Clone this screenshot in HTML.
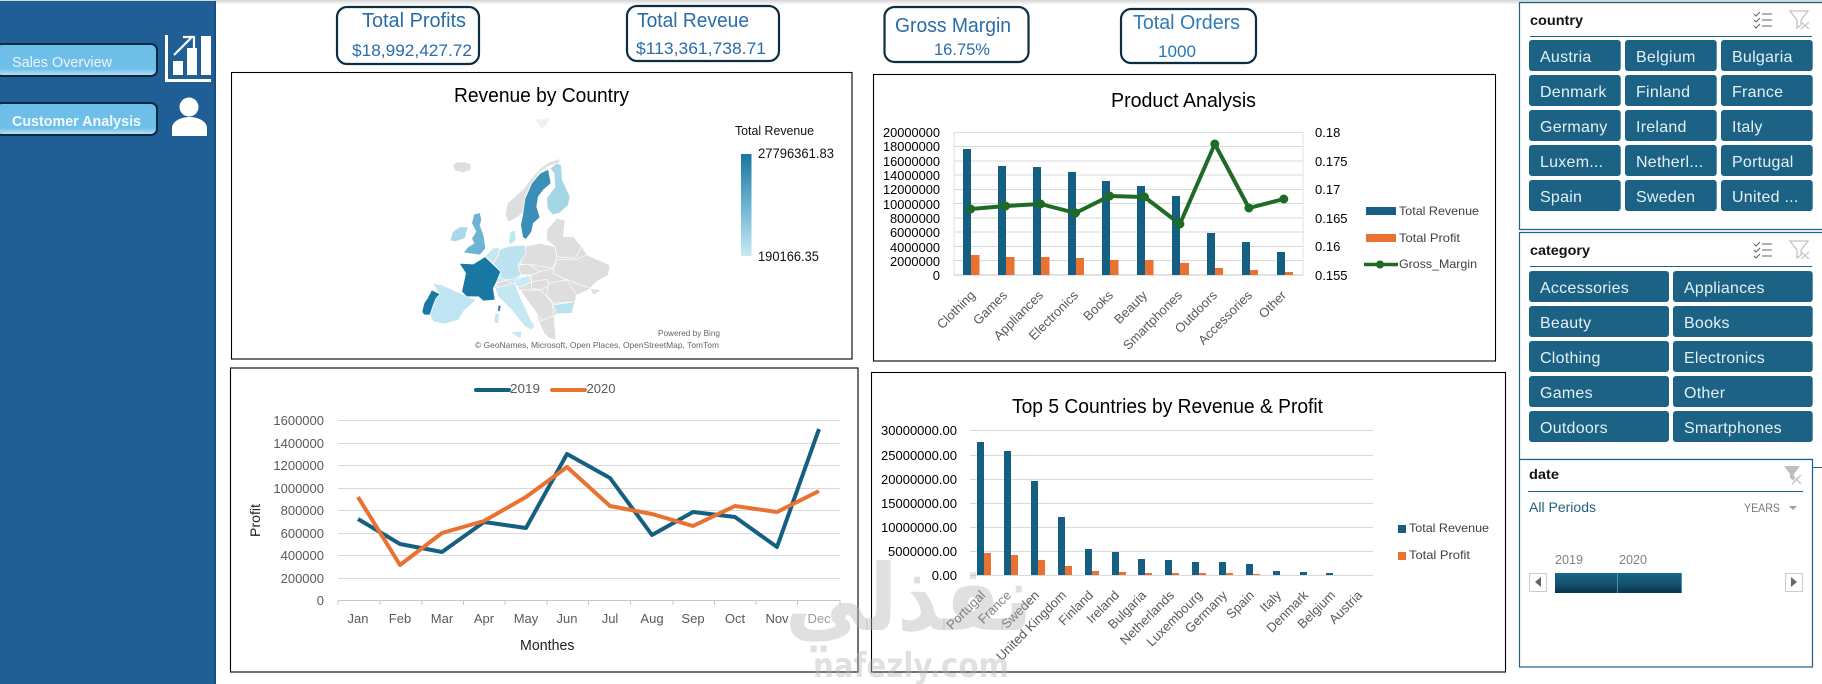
<!DOCTYPE html>
<html lang="en"><head><meta charset="utf-8"><title>Sales Dashboard</title>
<style>
html,body{margin:0;padding:0;background:#fff;width:1822px;height:684px;overflow:hidden}
svg{display:block;font-family:"Liberation Sans","DejaVu Sans",sans-serif}
.t{fill:#595959;font-size:13px}
.k{fill:#000;font-size:13px}
.sb{fill:#1b6285}
.st{fill:#e6f1f6;font-size:16px;letter-spacing:.25px}
.kp{fill:#fff;stroke:#0d2d42;stroke-width:2.2}
.kt{fill:#2a6ca8;font-size:20px}
.kv{fill:#2a6ca8;font-size:17px}
.g{stroke:#d9d9d9;stroke-width:1}
.box{fill:#fff;stroke:#000;stroke-width:1.1}
.rev{fill:#156082}.pro{fill:#e97132}
</style></head><body>
<svg width="1822" height="684" viewBox="0 0 1822 684" xmlns="http://www.w3.org/2000/svg">
<defs>
<linearGradient id="top" x1="0" y1="0" x2="0" y2="1"><stop offset="0" stop-color="#d4d4d4"/><stop offset="1" stop-color="#fff"/></linearGradient>
<linearGradient id="btn" x1="0" y1="0" x2="0" y2="1"><stop offset="0" stop-color="#6cbde8"/><stop offset=".78" stop-color="#6fc0e9"/><stop offset="1" stop-color="#c4e4f4"/></linearGradient>
<linearGradient id="leg" x1="0" y1="0" x2="0" y2="1"><stop offset="0" stop-color="#1a76a2"/><stop offset=".5" stop-color="#6cb1d1"/><stop offset="1" stop-color="#c8eaf3"/></linearGradient>
<linearGradient id="tl" x1="0" y1="0" x2="0" y2="1"><stop offset="0" stop-color="#186585"/><stop offset=".5" stop-color="#135672"/><stop offset="1" stop-color="#0b3347"/></linearGradient>
</defs>
<rect width="1822" height="684" fill="#fff"/>
<rect width="1822" height="5" fill="url(#top)"/>

<!-- sidebar -->
<rect x="0" y="1" width="214.500" height="683" fill="#205e96"/>
<rect x="214.500" y="1" width="1.500" height="683" fill="#174a78"/>
<rect x="-4" y="44" width="161" height="32" rx="6" fill="url(#btn)" stroke="#0a2a40" stroke-width="2"/>
<text x="12" y="67" font-size="15" fill="#eaf6fc" textLength="100" lengthAdjust="spacingAndGlyphs">Sales Overview</text>
<rect x="-4" y="103" width="161" height="32" rx="6" fill="url(#btn)" stroke="#0a2a40" stroke-width="2"/>
<text x="12" y="126" font-size="15" font-weight="700" fill="#f2fafe" textLength="129" lengthAdjust="spacingAndGlyphs">Customer Analysis</text>
<path d="M165 35h3v44h43v3h-46z" fill="#fff"/>
<path d="M173 61h10v14h-10zM187 48h10v27h-10zM201 36h10v39h-10z" fill="#fff"/>
<path d="M174 55L191 38" stroke="#fff" stroke-width="2.2" fill="none"/><path d="M183 37h11v11" stroke="#fff" stroke-width="2.2" fill="none"/>
<circle cx="189" cy="107" r="9.500" fill="#fff"/>
<path d="M172 136v-8c0-6 8-11 17.500-11s17.500 5 17.500 11v8z" fill="#fff"/>

<!-- KPI -->
<rect class="kp" x="337" y="7" width="142" height="57" rx="10"/>
<text class="kt" x="362" y="27" textLength="104" lengthAdjust="spacingAndGlyphs">Total Profits</text>
<text class="kv" x="352" y="56" textLength="120" lengthAdjust="spacingAndGlyphs">$18,992,427.72</text>
<rect class="kp" x="627" y="6" width="152" height="55" rx="10"/>
<text class="kt" x="637" y="27" textLength="112" lengthAdjust="spacingAndGlyphs">Total Reveue</text>
<text class="kv" x="636" y="54" textLength="130" lengthAdjust="spacingAndGlyphs">$113,361,738.71</text>
<rect class="kp" x="884.500" y="7" width="144" height="55" rx="10"/>
<text class="kt" x="895" y="32" textLength="116" lengthAdjust="spacingAndGlyphs">Gross Margin</text>
<text class="kv" x="934" y="55" textLength="56" lengthAdjust="spacingAndGlyphs">16.75%</text>
<rect class="kp" x="1121" y="9" width="135" height="54" rx="10"/>
<text class="kt" x="1133" y="29" style="fill:#2f7ab8" textLength="107" lengthAdjust="spacingAndGlyphs">Total Orders</text>
<text class="kv" x="1158" y="57" style="fill:#2278ba" textLength="38" lengthAdjust="spacingAndGlyphs">1000</text>

<!-- Revenue by Country -->
<rect class="box" x="231.500" y="72.500" width="620.500" height="286.500"/>
<text x="454" y="102" font-size="20" fill="#000" textLength="175" lengthAdjust="spacingAndGlyphs">Revenue by Country</text>
<text x="735" y="135" font-size="13" fill="#111" textLength="79" lengthAdjust="spacingAndGlyphs">Total Revenue</text>
<rect x="741" y="154" width="10.500" height="102" fill="url(#leg)"/>
<text x="758" y="158" font-size="13.500" fill="#111" textLength="76" lengthAdjust="spacingAndGlyphs">27796361.83</text>
<text x="758" y="261" font-size="13.500" fill="#111" textLength="61" lengthAdjust="spacingAndGlyphs">190166.35</text>
<text x="658" y="336" font-size="8.500" fill="#666" textLength="62" lengthAdjust="spacingAndGlyphs">Powered by Bing</text>
<text x="475" y="348" font-size="8.500" fill="#666" textLength="244" lengthAdjust="spacingAndGlyphs">© GeoNames, Microsoft, Open Places, OpenStreetMap, TomTom</text>
<g transform="translate(400,140) scale(.33333)" stroke="#fff" stroke-width="2" stroke-linejoin="round">
<polygon fill="#c5e7f2" stroke="none" points="285,445 345,430 362,405 355,375 378,340 375,315 298,328 255,350 302,395"/>
<polygon fill="#dedede" stroke="none" points="378,318 465,320 440,270 470,235 495,240 490,290 520,290 545,320 560,345 630,375 625,405 590,425 570,445 530,465 525,485 462,528 468,600 432,580 417,545 410,520 360,450 345,430 395,405 355,375"/>
<g fill="#dedede">
<polygon fill="#f0f0f0" points="405,-62 452,-66 440,-46 425,-32 415,-45"/>
<polygon points="158,75 170,66 195,66 214,72 212,90 190,98 165,92"/>
<polygon points="316,225 322,190 345,170 372,145 392,118 420,85 448,66 480,56 478,68 447,78 420,96 395,130 376,170 372,215 352,232 325,247"/>
<polygon points="440,270 470,235 495,240 490,290 520,290 545,320 525,355 470,350 465,320 440,300"/>
<polygon points="378,318 420,310 465,320 470,350 460,385 400,375 360,372"/>
<polygon points="460,385 475,358 530,358 560,345 630,375 625,405 590,425 570,445 530,430 490,415 460,400"/>
<polygon points="570,445 605,450 580,465"/>
<polygon points="355,375 385,372 420,395 395,405 362,405"/>
<polygon points="395,425 440,418 450,435 420,450 395,445"/>
<polygon points="420,395 460,385 460,400 490,415 500,420 445,430 440,418 395,425 395,405"/>
<polygon points="285,430 320,420 340,435 300,445"/>
<polygon points="445,430 500,420 530,465 525,485 460,490 440,465"/>
<polygon points="360,450 420,450 440,470 458,492 460,530 430,545 410,520"/>
<polygon points="417,545 462,528 468,600 448,595 432,580"/>
</g>
<polygon fill="#3a8fb8" points="445,88 453,130 430,150 415,170 410,200 420,232 400,250 395,275 378,298 368,292 362,255 368,225 375,175 395,130 420,100"/>
<polygon fill="#a4d6e8" points="470,70 484,75 487,120 510,170 505,195 480,218 458,225 442,205 440,175 465,140 462,100 450,85"/>
<polygon fill="#6cb3d5" points="222,222 240,218 245,240 240,255 252,290 257,325 240,345 190,338 205,320 222,310 215,295 228,275 215,250"/>
<polygon fill="#a8d8ea" points="150,302 158,275 180,260 205,262 200,275 195,295 165,305"/>
<polygon fill="#bfe4f2" points="98,430 125,435 185,462 228,480 190,515 175,540 135,552 100,545 90,525 108,470 118,462"/>
<polygon fill="#1a78a5" points="95,450 120,462 108,475 100,495 90,525 72,525 66,515 72,490 82,475"/>
<polygon fill="#1877a3" points="178,370 220,372 255,350 302,395 290,425 280,445 285,480 250,483 235,470 200,470 185,455 197,400"/>
<polygon fill="#bde3f1" points="298,328 330,318 375,315 378,340 355,375 362,405 330,420 300,415 302,395 280,370 295,345"/>
<polygon fill="#c2e6f2" points="330,275 345,270 348,300 335,312 325,310"/>
<polygon fill="#c5e7f2" points="255,350 278,325 298,322 295,345 280,370"/>
<polygon fill="#c8eaf5" points="345,420 385,405 395,425 365,440 345,437"/>
<polygon fill="#c5e7f2" points="285,445 345,430 360,470 395,545 405,560 393,570 375,560 335,510 295,470"/>
<polygon fill="#c5e7f2" points="330,576 366,573 362,597"/>
<polygon fill="#b9e1f0" points="460,495 525,485 515,520 470,522"/>
<polygon fill="#1a78a5" points="295,495 303,497 300,515 293,513"/>
<polygon fill="#c5e7f2" points="285,520 298,520 296,550 282,550"/>
</g>

<!-- Product Analysis -->
<rect class="box" x="873.500" y="74.500" width="622" height="286.500"/>
<text x="1111" y="107" font-size="20" fill="#000" textLength="145" lengthAdjust="spacingAndGlyphs">Product Analysis</text>
<rect x="954" y="132.500" width="349" height="142.500" fill="none" stroke="#cfe4ee"/>
<g class="g"><path d="M954 146.500H1303M954 161H1303M954 175H1303M954 189.500H1303M954 203.500H1303M954 218H1303M954 232H1303M954 246.500H1303M954 260.500H1303"/></g>
<path d="M954 275H1303" stroke="#c4c4c4"/>
<g class="k" text-anchor="end">
<text x="940" y="137" textLength="57" lengthAdjust="spacingAndGlyphs">20000000</text>
<text x="940" y="151" textLength="57" lengthAdjust="spacingAndGlyphs">18000000</text>
<text x="940" y="166" textLength="57" lengthAdjust="spacingAndGlyphs">16000000</text>
<text x="940" y="180" textLength="57" lengthAdjust="spacingAndGlyphs">14000000</text>
<text x="940" y="194" textLength="57" lengthAdjust="spacingAndGlyphs">12000000</text>
<text x="940" y="209" textLength="57" lengthAdjust="spacingAndGlyphs">10000000</text>
<text x="940" y="223" textLength="50" lengthAdjust="spacingAndGlyphs">8000000</text>
<text x="940" y="237" textLength="50" lengthAdjust="spacingAndGlyphs">6000000</text>
<text x="940" y="252" textLength="50" lengthAdjust="spacingAndGlyphs">4000000</text>
<text x="940" y="266" textLength="50" lengthAdjust="spacingAndGlyphs">2000000</text>
<text x="940" y="280">0</text>
</g>
<g class="k">
<text x="1315" y="137">0.18</text><text x="1315" y="166">0.175</text><text x="1315" y="194">0.17</text><text x="1315" y="223">0.165</text><text x="1315" y="251">0.16</text><text x="1315" y="280">0.155</text>
</g>
<g class="rev">
<rect x="963" y="149" width="8" height="126"/><rect x="998" y="166" width="8" height="109"/><rect x="1033" y="167" width="8" height="108"/><rect x="1068" y="172" width="8" height="103"/><rect x="1102" y="181" width="8" height="94"/><rect x="1137" y="186" width="8" height="89"/><rect x="1172" y="196" width="8" height="79"/><rect x="1207" y="233" width="8" height="42"/><rect x="1242" y="242" width="8" height="33"/><rect x="1277" y="252" width="8" height="23"/>
</g>
<g class="pro">
<rect x="971" y="255" width="8.500" height="20"/><rect x="1006" y="257" width="8.500" height="18"/><rect x="1041" y="257" width="8.500" height="18"/><rect x="1076" y="258" width="8" height="17"/><rect x="1110" y="260" width="8.500" height="15"/><rect x="1145" y="260" width="8.500" height="15"/><rect x="1180" y="263" width="9" height="12"/><rect x="1215" y="268" width="8" height="7"/><rect x="1250" y="270" width="8" height="5"/><rect x="1285" y="272" width="8" height="3"/>
</g>
<polyline points="970.7,209 1005.600,206 1040.600,204 1075.500,213 1109.600,196 1144.500,197 1179.900,224 1214.800,144 1248.900,208 1283.800,199" fill="none" stroke="#1e6b26" stroke-width="4" stroke-linejoin="round"/>
<g fill="#1e6b26"><circle cx="970.7" cy="209" r="4.500"/><circle cx="1005.600" cy="206" r="4.500"/><circle cx="1040.600" cy="204" r="4.500"/><circle cx="1075.500" cy="213" r="4.500"/><circle cx="1109.600" cy="196" r="4.500"/><circle cx="1144.500" cy="197" r="4.500"/><circle cx="1179.900" cy="224" r="4.500"/><circle cx="1214.800" cy="144" r="4.500"/><circle cx="1248.900" cy="208" r="4.500"/><circle cx="1283.800" cy="199" r="4.500"/></g>
<g class="t" text-anchor="end">
<text transform="translate(976,296) rotate(-45)">Clothing</text>
<text transform="translate(1008,296) rotate(-45)">Games</text>
<text transform="translate(1044,296) rotate(-45)">Appliances</text>
<text transform="translate(1079,296) rotate(-45)">Electronics</text>
<text transform="translate(1114,296) rotate(-45)">Books</text>
<text transform="translate(1148,296) rotate(-45)">Beauty</text>
<text transform="translate(1183,296) rotate(-45)">Smartphones</text>
<text transform="translate(1218,296) rotate(-45)">Outdoors</text>
<text transform="translate(1253,296) rotate(-45)">Accessories</text>
<text transform="translate(1287,296) rotate(-45)">Other</text>
</g>
<rect class="rev" x="1366" y="207" width="30" height="8"/>
<rect class="pro" x="1366" y="234" width="30" height="8"/>
<path d="M1364 264.500H1398" stroke="#1e6b26" stroke-width="3.500"/><circle cx="1380" cy="264.500" r="4" fill="#1e6b26"/>
<g font-size="12" fill="#404040">
<text x="1399" y="215" textLength="80" lengthAdjust="spacingAndGlyphs">Total Revenue</text>
<text x="1399" y="242" textLength="61" lengthAdjust="spacingAndGlyphs">Total Profit</text>
<text x="1399" y="268" textLength="78" lengthAdjust="spacingAndGlyphs">Gross_Margin</text>
</g>

<!-- Line chart -->
<rect class="box" x="230.500" y="368" width="627.500" height="304"/>
<path d="M476 390H509" stroke="#156082" stroke-width="4" stroke-linecap="round"/>
<text x="510" y="393" class="t" textLength="30" lengthAdjust="spacingAndGlyphs">2019</text>
<path d="M552 390H585" stroke="#e97132" stroke-width="4" stroke-linecap="round"/>
<text x="586.500" y="393" class="t" textLength="29" lengthAdjust="spacingAndGlyphs">2020</text>
<g class="g"><path d="M338 420.500H840M338 443.500H840M338 465.500H840M338 488.500H840M338 510.500H840M338 533.500H840M338 555.500H840M338 578.500H840"/></g>
<path d="M338 600.500H840M338 600V605M380 600V605M422 600V605M463.500 600V605M505 600V605M547 600V605M588.500 600V605M630.500 600V605M673 600V605M714.500 600V605M756 600V605M797.500 600V605M840 600V605" stroke="#c8c8c8" fill="none"/>
<g class="t" text-anchor="end">
<text x="324" y="425">1600000</text><text x="324" y="448">1400000</text><text x="324" y="470">1200000</text><text x="324" y="493">1000000</text><text x="324" y="515">800000</text><text x="324" y="538">600000</text><text x="324" y="560">400000</text><text x="324" y="583">200000</text><text x="324" y="605">0</text>
</g>
<g class="t" text-anchor="middle">
<text x="358" y="623">Jan</text><text x="400" y="623">Feb</text><text x="442" y="623">Mar</text><text x="484" y="623">Apr</text><text x="526" y="623">May</text><text x="567" y="623">Jun</text><text x="610" y="623">Jul</text><text x="652" y="623">Aug</text><text x="693" y="623">Sep</text><text x="735" y="623">Oct</text><text x="777" y="623">Nov</text>
</g>
<polyline points="358,519 400,544 442,552 484,522 526,528 567,454 610,478 652,535 693,512 735,517 777,547 819,429" fill="none" stroke="#156082" stroke-width="4" stroke-linejoin="round"/>
<polyline points="358,497 400,565 442,533 484,521 526,497 567,467 610,506 652,514 693,526 735,506 777,512 819,491" fill="none" stroke="#e97132" stroke-width="4" stroke-linejoin="round"/>
<text transform="translate(260,537) rotate(-90)" font-size="14" fill="#222" textLength="33" lengthAdjust="spacingAndGlyphs">Profit</text>
<text x="520" y="650" font-size="15" fill="#222" textLength="54.500" lengthAdjust="spacingAndGlyphs">Monthes</text>

<!-- Top 5 -->
<rect class="box" x="871.500" y="372.500" width="634" height="299.500"/>
<text x="1012" y="413" font-size="20" fill="#000" textLength="311" lengthAdjust="spacingAndGlyphs">Top 5 Countries by Revenue &amp; Profit</text>
<g class="g"><path d="M970 430.500H1373M970 455.500H1373M970 479.500H1373M970 503.500H1373M970 527.500H1373M970 551.500H1373M970 575.500H1373"/></g>
<g class="k" text-anchor="end">
<text x="957" y="435" textLength="76" lengthAdjust="spacingAndGlyphs">30000000.00</text>
<text x="957" y="460" textLength="76" lengthAdjust="spacingAndGlyphs">25000000.00</text>
<text x="957" y="484" textLength="76" lengthAdjust="spacingAndGlyphs">20000000.00</text>
<text x="957" y="508" textLength="76" lengthAdjust="spacingAndGlyphs">15000000.00</text>
<text x="957" y="532" textLength="76" lengthAdjust="spacingAndGlyphs">10000000.00</text>
<text x="957" y="556" textLength="69" lengthAdjust="spacingAndGlyphs">5000000.00</text>
<text x="957" y="580">0.00</text>
</g>
<g class="rev">
<rect x="977" y="442" width="7" height="133"/><rect x="1004" y="451" width="7" height="124"/><rect x="1031" y="481" width="7" height="94"/><rect x="1058" y="517" width="7" height="58"/><rect x="1085" y="549" width="7" height="26"/><rect x="1112" y="552" width="7" height="23"/><rect x="1138" y="559" width="7" height="16"/><rect x="1165" y="560" width="7" height="15"/><rect x="1192" y="562" width="7" height="13"/><rect x="1219" y="562" width="7" height="13"/><rect x="1246" y="564" width="7" height="11"/><rect x="1273" y="571" width="7" height="4"/><rect x="1300" y="572" width="7" height="3"/><rect x="1326" y="573" width="7" height="2"/>
</g>
<g class="pro">
<rect x="984" y="553" width="7" height="22"/><rect x="1011" y="555" width="7" height="20"/><rect x="1038" y="560" width="7" height="15"/><rect x="1065" y="566" width="7" height="9"/><rect x="1092" y="571" width="7" height="4"/><rect x="1119" y="572" width="7" height="3"/><rect x="1145" y="573" width="7" height="2"/><rect x="1172" y="573" width="7" height="2"/><rect x="1199" y="573" width="7" height="2"/><rect x="1226" y="573" width="7" height="2"/><rect x="1253" y="574" width="7" height="1"/>
</g>
<g class="t" text-anchor="end">
<text transform="translate(1040,596) rotate(-45)">Sweden</text>
<text transform="translate(1067,596) rotate(-45)">United Kingdom</text>
<text transform="translate(1094,596) rotate(-45)">Finland</text>
<text transform="translate(1120,596) rotate(-45)">Ireland</text>
<text transform="translate(1147,596) rotate(-45)">Bulgaria</text>
<text transform="translate(1175,596) rotate(-45)">Netherlands</text>
<text transform="translate(1203,596) rotate(-45)">Luxembourg</text>
<text transform="translate(1228,596) rotate(-45)">Germany</text>
<text transform="translate(1255,596) rotate(-45)">Spain</text>
<text transform="translate(1282,596) rotate(-45)">Italy</text>
<text transform="translate(1309,596) rotate(-45)">Denmark</text>
<text transform="translate(1336,596) rotate(-45)">Belgium</text>
<text transform="translate(1363,596) rotate(-45)">Austria</text>
</g>
<rect class="rev" x="1398" y="525" width="8" height="8"/>
<rect class="pro" x="1398" y="552" width="8" height="8"/>
<g font-size="12" fill="#404040">
<text x="1409" y="532" textLength="80" lengthAdjust="spacingAndGlyphs">Total Revenue</text>
<text x="1409" y="559" textLength="61" lengthAdjust="spacingAndGlyphs">Total Profit</text>
</g>

<!-- country slicer -->
<path d="M1822 2.500H1519.500V229.500H1822" fill="none" stroke="#1f6288" stroke-width="1.200"/>
<text x="1530" y="25" font-size="14" font-weight="700" fill="#111" textLength="53" lengthAdjust="spacingAndGlyphs">country</text>
<path d="M1530 36.500H1812" stroke="#1f6288"/>
<g fill="none" stroke="#666" stroke-width="1.100"><path d="M1754 14l2 2 4-4M1754 20l2 2 4-4M1754 26l2 2 4-4"/><path d="M1762 14h10M1762 20h10M1762 26h10"/></g>
<path d="M1790 11h18l-7 9v5l-4 3v-8z" fill="#fff" stroke="#c4c4c4" stroke-width="1.300"/><path d="M1801 22l8 7M1809 22l-8 7" stroke="#c8c8c8" stroke-width="1.300"/>
<g class="sb">
<rect x="1529" y="40" width="91.700" height="31" rx="3"/><rect x="1625" y="40" width="91.700" height="31" rx="3"/><rect x="1721" y="40" width="91.700" height="31" rx="3"/>
<rect x="1529" y="75" width="91.700" height="31" rx="3"/><rect x="1625" y="75" width="91.700" height="31" rx="3"/><rect x="1721" y="75" width="91.700" height="31" rx="3"/>
<rect x="1529" y="110" width="91.700" height="31" rx="3"/><rect x="1625" y="110" width="91.700" height="31" rx="3"/><rect x="1721" y="110" width="91.700" height="31" rx="3"/>
<rect x="1529" y="145" width="91.700" height="31" rx="3"/><rect x="1625" y="145" width="91.700" height="31" rx="3"/><rect x="1721" y="145" width="91.700" height="31" rx="3"/>
<rect x="1529" y="180" width="91.700" height="31" rx="3"/><rect x="1625" y="180" width="91.700" height="31" rx="3"/><rect x="1721" y="180" width="91.700" height="31" rx="3"/>
</g>
<g class="st">
<text x="1540" y="62">Austria</text><text x="1636" y="62">Belgium</text><text x="1732" y="62">Bulgaria</text>
<text x="1540" y="97">Denmark</text><text x="1636" y="97">Finland</text><text x="1732" y="97">France</text>
<text x="1540" y="132">Germany</text><text x="1636" y="132">Ireland</text><text x="1732" y="132">Italy</text>
<text x="1540" y="167">Luxem...</text><text x="1636" y="167">Netherl...</text><text x="1732" y="167">Portugal</text>
<text x="1540" y="202">Spain</text><text x="1636" y="202">Sweden</text><text x="1732" y="202">United ...</text>
</g>

<!-- category slicer -->
<path d="M1822 232.500H1519.500V459.500H1813" fill="none" stroke="#1f6288" stroke-width="1.200"/>
<text x="1530" y="255" font-size="14" font-weight="700" fill="#111" textLength="60" lengthAdjust="spacingAndGlyphs">category</text>
<path d="M1530 266.500H1812" stroke="#1f6288"/>
<g fill="none" stroke="#666" stroke-width="1.100"><path d="M1754 244l2 2 4-4M1754 250l2 2 4-4M1754 256l2 2 4-4"/><path d="M1762 244h10M1762 250h10M1762 256h10"/></g>
<path d="M1790 241h18l-7 9v5l-4 3v-8z" fill="#fff" stroke="#c4c4c4" stroke-width="1.300"/><path d="M1801 252l8 7M1809 252l-8 7" stroke="#c8c8c8" stroke-width="1.300"/>
<g class="sb">
<rect x="1529" y="271" width="140" height="31" rx="3"/><rect x="1673" y="271" width="139.700" height="31" rx="3"/>
<rect x="1529" y="306" width="140" height="31" rx="3"/><rect x="1673" y="306" width="139.700" height="31" rx="3"/>
<rect x="1529" y="341" width="140" height="31" rx="3"/><rect x="1673" y="341" width="139.700" height="31" rx="3"/>
<rect x="1529" y="376" width="140" height="31" rx="3"/><rect x="1673" y="376" width="139.700" height="31" rx="3"/>
<rect x="1529" y="411" width="140" height="31" rx="3"/><rect x="1673" y="411" width="139.700" height="31" rx="3"/>
</g>
<g class="st">
<text x="1540" y="293">Accessories</text><text x="1684" y="293">Appliances</text>
<text x="1540" y="328">Beauty</text><text x="1684" y="328">Books</text>
<text x="1540" y="363">Clothing</text><text x="1684" y="363">Electronics</text>
<text x="1540" y="398">Games</text><text x="1684" y="398">Other</text>
<text x="1540" y="433">Outdoors</text><text x="1684" y="433">Smartphones</text>
</g>

<!-- date slicer -->
<rect x="1519.500" y="459.500" width="293" height="207.500" fill="#fff" stroke="#1f6288" stroke-width="1.200"/>
<path d="M1813 467.500H1822" stroke="#1f6288"/>
<text x="1529" y="479" font-size="14" font-weight="700" fill="#111" textLength="30" lengthAdjust="spacingAndGlyphs">date</text>
<path d="M1528 491.500H1803" stroke="#1f6288"/>
<path d="M1784 466h16l-6 8v7l-4-3v-4z" fill="#bdbdbd"/><path d="M1792 475l9 9M1801 475l-9 9" stroke="#c4c4c4" stroke-width="1.400"/>
<text x="1529" y="512" font-size="14" fill="#1f5f7f" textLength="67" lengthAdjust="spacingAndGlyphs">All Periods</text>
<text x="1744" y="512" font-size="12" fill="#7a7a7a" textLength="36" lengthAdjust="spacingAndGlyphs">YEARS</text>
<path d="M1789 506h8l-4 4z" fill="#a0a0a0"/>
<text x="1555" y="564" font-size="12.500" fill="#808080" textLength="28" lengthAdjust="spacingAndGlyphs">2019</text>
<text x="1619" y="564" font-size="12.500" fill="#808080" textLength="28" lengthAdjust="spacingAndGlyphs">2020</text>
<rect x="1555" y="573" width="127" height="20" fill="url(#tl)"/>
<path d="M1617.500 573V593M1681.500 573V593" stroke="#4fa3c9" stroke-width=".8"/>
<rect x="1529.500" y="573.500" width="17" height="18" fill="#fff" stroke="#ccc"/>
<path d="M1541 577v10l-6-5z" fill="#666"/>
<rect x="1785.500" y="573.500" width="17" height="18" fill="#fff" stroke="#ccc"/>
<path d="M1791 577v10l6-5z" fill="#666"/>

<!-- watermark -->
<g fill="#b4b4b4" fill-opacity=".42">
<text transform="translate(785,630) scale(.880,1)" font-family="'DejaVu Sans',sans-serif" font-size="92" font-weight="700" direction="rtl" text-anchor="end">نفذلي</text>
<text x="813" y="677" font-family="'DejaVu Sans',sans-serif" font-size="34" font-weight="700" textLength="196" lengthAdjust="spacingAndGlyphs">nafezly.com</text>
</g>
<!-- labels drawn above the watermark, faded as in the source -->
<text x="819" y="623" class="t" text-anchor="middle" style="fill-opacity:.6">Dec</text>
<g class="t" text-anchor="end" style="fill-opacity:.75">
<text transform="translate(986,596) rotate(-45)">Portugal</text>
<text transform="translate(1012,596) rotate(-45)">France</text>
</g>
</svg>
</body></html>
